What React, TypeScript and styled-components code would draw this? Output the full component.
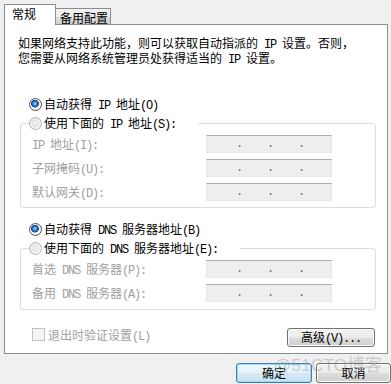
import React from 'react';
import styled, { createGlobalStyle } from 'styled-components';

const Global = createGlobalStyle`
  html, body { margin: 0; padding: 0; background: #f0f0f0; }
  body {
    width: 391px; height: 384px; overflow: hidden;
    font-family: "Noto Sans CJK SC", "Noto Sans", sans-serif;
    font-size: 12px; color: #000;
  }
  * { box-sizing: border-box; }
`;

const Window = styled.div`
  position: relative;
  width: 391px;
  height: 384px;
  display: flex;
  flex-direction: column;
  padding-top: 4px;
`;

const TabBar = styled.div`
  display: flex;
  align-items: flex-end;
  height: 20px;
  margin-left: 4px;
  position: relative;
  z-index: 1;
`;

const Tab = styled.div<{ $active?: boolean }>`
  display: flex;
  align-items: flex-start;
  line-height: 14px;
  white-space: nowrap;
  border: 1px solid #898c95;
  border-bottom: none;
  ${p => p.$active
    ? `width: 52px; height: 21px; margin-bottom: -1px; padding: 2px 0 0 7px; background: #fff;`
    : `width: 55px; height: 16px; border-left: none; padding: 2px 0 0 4px;
       background: linear-gradient(#f2f2f2 0%, #ebebeb 50%, #dddddd 51%, #cfcfcf 100%);`}
`;

const Panel = styled.div`
  margin: 0 3px 0 4px;
  height: 330px;
  background: #fff;
  border: 1px solid #898c95;
  padding: 11px 11px 0 13px;
  display: flex;
  flex-direction: column;
`;

const Desc = styled.p`
  margin: 0;
  line-height: 13px;
  white-space: nowrap;
`;

const Lat = styled.span`
  font-family: "Liberation Mono", "DejaVu Sans Mono", monospace;
  letter-spacing: -1.2px;
  line-height: 1;
`;

const T = ({ children }: { children: string }) => {
  const parts = children.split(/([\x20-\x7e]+)/).filter(Boolean);
  return (
    <>
      {parts.map((p, i) =>
        /^[\x20-\x7e]+$/.test(p) ? <Lat key={i}>{p}</Lat> : <React.Fragment key={i}>{p}</React.Fragment>
      )}
    </>
  );
};

const RadioRow = styled.div<{ $mt: number }>`
  display: flex;
  align-items: center;
  gap: 2px;
  height: 16px;
  margin-top: ${p => p.$mt}px;
  padding-left: 11px;
  white-space: nowrap;
`;

const Radio = styled.span<{ $checked?: boolean }>`
  flex: none;
  width: 13px;
  height: 13px;
  border-radius: 50%;
  border: 1px solid ${p => (p.$checked ? '#4f5358' : '#aab0b5')};
  background: ${p =>
    p.$checked
      ? 'radial-gradient(circle at 45% 42%, #bfe6ff 0, #4a9be0 1.4px, #1f62b4 2.8px, #173f80 3.6px, #ffffff 4.2px, #f4f4f4 5.6px)'
      : 'radial-gradient(circle at 45% 45%, #f4f4f4 0, #e2e4e6 3px, #f8f8f8 5.6px)'};
`;

const RowText = styled.span<{ $disabled?: boolean }>`
  line-height: 16px;
  color: ${p => (p.$disabled ? '#a0a0a0' : '#000')};
`;

const Group = styled.fieldset<{ $pb: number }>`
  margin: 3px 0 0 2px;
  min-width: 0;
  border: 1px solid #d5dfe5;
  border-radius: 3px;
  padding: 4px 8px ${p => p.$pb}px 8px;
`;

const Legend = styled.legend`
  display: flex;
  align-items: center;
  gap: 2px;
  height: 16px;
  padding: 0 22px 0 0;
  white-space: nowrap;
`;

const Fields = styled.div`
  display: grid;
  grid-template-columns: 177px 126px;
  grid-auto-rows: 18px;
  row-gap: 6px;
`;

const FieldLabel = styled.span`
  margin-left: 3px;
  line-height: 18px;
  color: #a0a0a0;
  white-space: nowrap;
`;

const IpBox = styled.div`
  height: 18px;
  border: 1px solid #e3e9ef;
  border-top-color: #abadb3;
  border-left-color: #e2e3ea;
  background: #efefef;
  display: flex;
  padding-left: 29px;
`;

const IpDot = styled.span`
  width: 31px;
  font-family: "Liberation Mono", monospace;
  font-size: 12px;
  line-height: 16px;
  color: #707070;
`;

const BottomRow = styled.div`
  display: flex;
  justify-content: space-between;
  align-items: flex-start;
  margin-top: 18px;
  margin-right: 1px;
`;

const CheckItem = styled.div`
  display: flex;
  align-items: center;
  gap: 3px;
  margin-top: -1px;
  padding-left: 14px;
  height: 15px;
  color: #a0a0a0;
  white-space: nowrap;
`;

const CheckBox = styled.span`
  flex: none;
  width: 13px;
  height: 13px;
  border: 1px solid #c0c0c0;
  background: #f4f4f4;
`;

const Button = styled.button<{ $w: number; $h: number; $default?: boolean }>`
  width: ${p => p.$w}px;
  height: ${p => p.$h}px;
  padding: 0;
  margin: 0;
  font: 12px "Noto Sans CJK SC", sans-serif;
  line-height: 14px;
  color: #000;
  white-space: nowrap;
  border-radius: 3px;
  border: 1px solid ${p => (p.$default ? '#3c7fb1' : '#707070')};
  box-shadow: inset 0 0 0 1px ${p => (p.$default ? '#9fd7f6' : '#fbfbfb')};
  background: ${p =>
    p.$default
      ? 'linear-gradient(#eef7fc 0%, #e4f1fa 50%, #d6e9f6 51%, #c9e1f2 100%)'
      : 'linear-gradient(#f2f2f2 0%, #ebebeb 50%, #dddddd 51%, #cfcfcf 100%)'};
`;

const Footer = styled.div`
  display: flex;
  justify-content: flex-end;
  gap: 4px;
  margin-top: 9px;
`;

const Watermark = styled.div`
  position: absolute;
  right: 9px;
  top: 351px;
  font-family: "Liberation Sans", "Noto Sans CJK SC", sans-serif;
  font-size: 17px;
  letter-spacing: 0.3px;
  color: rgba(150, 150, 150, 0.45);
  pointer-events: none;
  white-space: nowrap;
`;

const IpField = () => (
  <IpBox>
    <IpDot>.</IpDot>
    <IpDot>.</IpDot>
    <IpDot>.</IpDot>
  </IpBox>
);

export default function App() {
  return (
    <Window>
      <Global />
      <TabBar>
        <Tab $active>常规</Tab>
        <Tab>备用配置</Tab>
      </TabBar>
      <Panel>
        <Desc>
          <T>如果网络支持此功能，则可以获取自动指派的 IP 设置。否则，</T>
          <br />
          <T>您需要从网络系统管理员处获得适当的 IP 设置。</T>
        </Desc>

        <RadioRow $mt={30}>
          <Radio $checked />
          <RowText><T>自动获得 IP 地址(O)</T></RowText>
        </RadioRow>
        <Group $pb={6}>
          <Legend>
            <Radio />
            <RowText><T>使用下面的 IP 地址(S):</T></RowText>
          </Legend>
          <Fields>
            <FieldLabel><T>IP 地址(I):</T></FieldLabel>
            <IpField />
            <FieldLabel><T>子网掩码(U):</T></FieldLabel>
            <IpField />
            <FieldLabel><T>默认网关(D):</T></FieldLabel>
            <IpField />
          </Fields>
        </Group>

        <RadioRow $mt={13}>
          <Radio $checked />
          <RowText><T>自动获得 DNS 服务器地址(B)</T></RowText>
        </RadioRow>
        <Group $pb={7}>
          <Legend>
            <Radio />
            <RowText><T>使用下面的 DNS 服务器地址(E):</T></RowText>
          </Legend>
          <Fields>
            <FieldLabel><T>首选 DNS 服务器(P):</T></FieldLabel>
            <IpField />
            <FieldLabel><T>备用 DNS 服务器(A):</T></FieldLabel>
            <IpField />
          </Fields>
        </Group>

        <BottomRow>
          <CheckItem>
            <CheckBox />
            <span><T>退出时验证设置(L)</T></span>
          </CheckItem>
          <Button $w={88} $h={19}><T>高级(V)...</T></Button>
        </BottomRow>
      </Panel>
      <Footer>
        <Button $w={76} $h={20} $default>确定</Button>
        <Button $w={75} $h={20}>取消</Button>
      </Footer>
      <Watermark>@51CTO博客</Watermark>
    </Window>
  );
}
